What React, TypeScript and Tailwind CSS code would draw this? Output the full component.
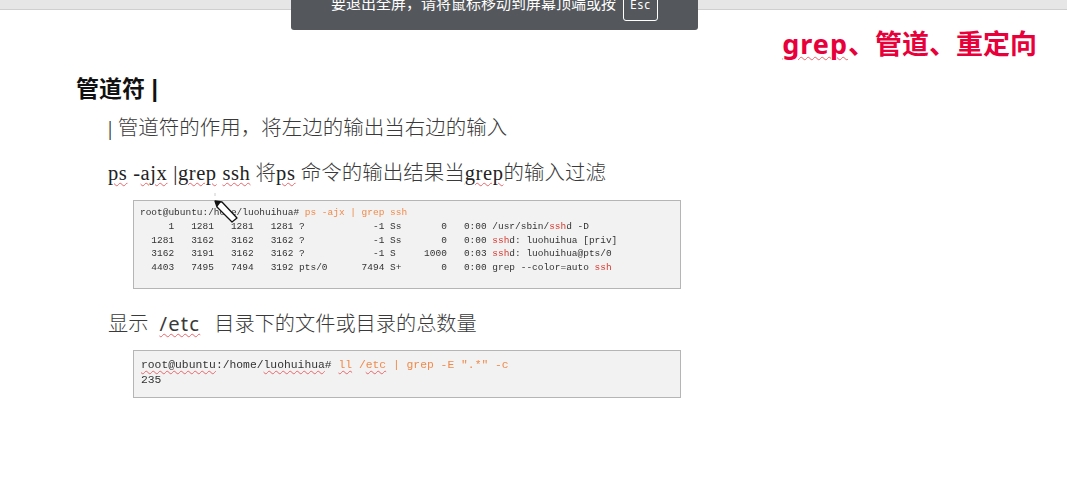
const wavy = "underline decoration-wavy decoration-[#e8656a] decoration-1 underline-offset-2";
const cjk = '"Liberation Serif","Noto Sans CJK SC",serif';

function W({ children }: { children: React.ReactNode }) {
  return <span className={wavy}>{children}</span>;
}
function L({ children }: { children: React.ReactNode }) {
  return <span className="tracking-[0.6px] font-normal text-[#222]">{children}</span>;
}
const O = ({ children }: { children: React.ReactNode }) => <span className="text-[#f08a4b]">{children}</span>;
const R = ({ children }: { children: React.ReactNode }) => <span className="text-[#d8382e]">{children}</span>;

export default function App() {
  return (
    <div className="relative h-[498px] w-[1067px] overflow-hidden bg-white text-[#3a3a3a]">
      <div className="h-[10px] border-b border-[#cfcfcf] bg-[#e6e6e6]" />

      <div className="absolute left-[291px] top-[-11px] flex h-[41px] w-[407px] items-start gap-[7px] rounded-b-[3px] bg-[#54575b] pl-[40px] text-white">
        <span className="mt-[2px] whitespace-nowrap text-[15px] leading-[24px]" style={{ fontFamily: '"Noto Sans CJK SC",sans-serif' }}>要退出全屏，请将鼠标移动到屏幕顶端或按</span>
        <span className="flex h-[32px] w-[35px] items-center justify-center rounded-[3px] border border-white text-[12px] tracking-[1px]" style={{ fontFamily: '"Noto Sans",sans-serif' }}>Esc</span>
      </div>

      <div className="flex justify-end pr-[30px] pt-[16px]">
        <h1 className="text-[27px] font-bold leading-[36px] text-[#e8003a]" style={{ fontFamily: '"Noto Sans","Noto Sans CJK SC",sans-serif' }}>
          <span className={"tracking-[1px] " + wavy}>grep</span>、管道、重定向
        </h1>
      </div>

      <h2 className="ml-[76px] mt-[11px] text-[23px] font-bold leading-[32px] text-[#111]" style={{ fontFamily: '"Liberation Sans","Noto Sans CJK SC",sans-serif' }}>管道符 |</h2>

      <div className="ml-[108px] mt-[8px] text-[20.5px] font-light leading-[30px]" style={{ fontFamily: cjk }}>
        <p className="whitespace-nowrap"><L>|</L> 管道符的作用，将左边的输出当右边的输入</p>
        <p className="mt-[15px] whitespace-nowrap"><L><W>ps</W> -<W>ajx</W> |<W>grep</W> <W>ssh</W></L> 将<L><W>ps</W></L> 命令的输出结果当<L><W>grep</W></L>的输入过滤</p>
      </div>

      <div className="relative ml-[133px] mt-[12px] h-[89px] w-[548px] border border-[#b5b5b5] bg-[#f2f2f2] pl-[6px] pt-[5px]">
        <pre className="text-[9.47px] leading-[13.75px] text-[#333] blur-[0.3px]" style={{ fontFamily: '"Liberation Mono",monospace' }}>
          root@ubuntu:/home/luohuihua# <O>ps -ajx | grep ssh</O>{"\n"}
          {"     1   1281   1281   1281 ?            -1 Ss       0   0:00 /usr/sbin/"}<R>ssh</R>{"d -D\n"}
          {"  1281   3162   3162   3162 ?            -1 Ss       0   0:00 "}<R>ssh</R>{"d: luohuihua [priv]\n"}
          {"  3162   3191   3162   3162 ?            -1 S     1000   0:03 "}<R>ssh</R>{"d: luohuihua@pts/0\n"}
          {"  4403   7495   7494   3192 pts/0      7494 S+       0   0:00 grep --color=auto "}<R>ssh</R>
        </pre>
        <svg className="absolute left-[80px] top-[-8px]" width="26" height="32" viewBox="0 0 26 32">
          <path d="M1 0 V3" stroke="#cccccc" strokeWidth="1" />
          <path d="M1 8 L8 9 L23 25 L18 29 L3 14 Z" fill="#fff" stroke="#111" strokeWidth="1.3" strokeLinejoin="round" />
          <path d="M1 8 L7 9 L3 14 Z" fill="#111" />
        </svg>
      </div>

      <p className="ml-[108px] mt-[19px] whitespace-nowrap text-[20.2px] font-light leading-[30px]" style={{ fontFamily: '"Noto Sans CJK SC",sans-serif' }}>
        显示
        <span className={"ml-[11px] mr-[14px] font-normal tracking-[1.25px] " + wavy} style={{ fontFamily: '"Noto Sans",sans-serif' }}>/etc</span>
        目录下的文件或目录的总数量
      </p>

      <div className="ml-[133px] mt-[12px] h-[48px] w-[548px] border border-[#b5b5b5] bg-[#f2f2f2] pl-[7px] pt-[7px]">
        <pre className="text-[11.35px] leading-[15px] text-[#333] blur-[0.3px]" style={{ fontFamily: '"Liberation Mono",monospace' }}>
          <W>root@ubuntu</W>:/home/<W>luohuihua</W># <O><W>ll</W> /<W>etc</W> | grep -E ".*" -c</O>{"\n"}235
        </pre>
      </div>
    </div>
  );
}
